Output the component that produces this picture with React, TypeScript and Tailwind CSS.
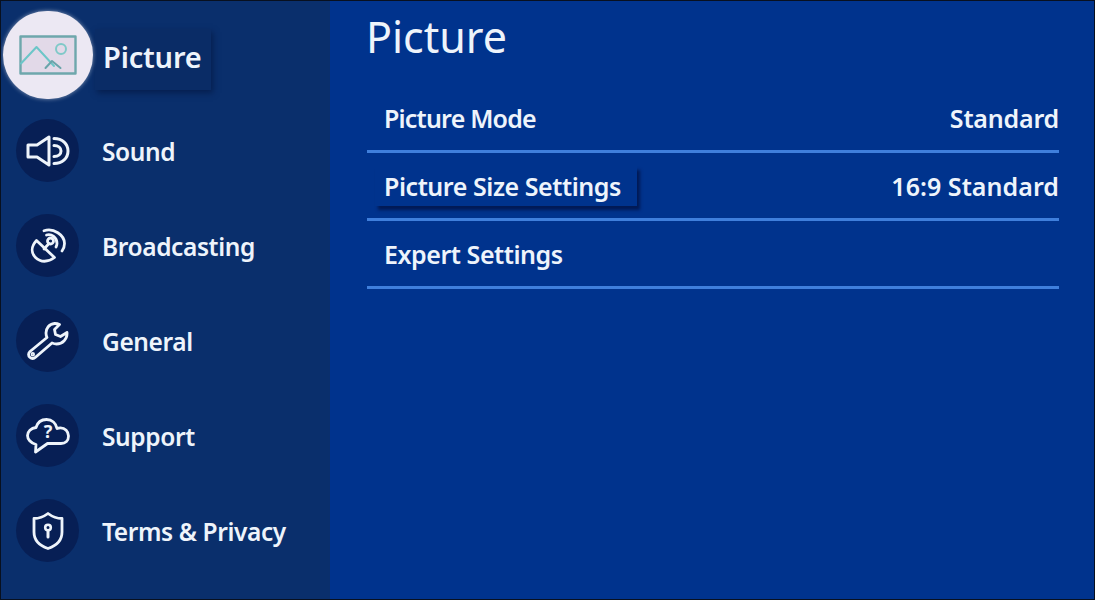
const ink = "#eef4fb";

function PictureIcon() {
  return (
    <svg width="58" height="40" viewBox="0 0 58 40" fill="none" strokeLinejoin="round" strokeLinecap="round">
      <rect x="1.5" y="1.5" width="55" height="37" fill="#e2d9e8" stroke="#6ea7ac" strokeWidth="2.4" />
      <circle cx="42" cy="14" r="5" stroke="#7fc9c8" strokeWidth="2" />
      <path d="M2 28.5 L17.5 12 L35 31" stroke="#6cc6c8" strokeWidth="2" />
      <path d="M26.5 33 L33 26 L41.5 33" stroke="#6aa4aa" strokeWidth="2" />
    </svg>
  );
}

function SoundIcon() {
  return (
    <svg width="44" height="32" viewBox="0 0 44 32" fill="none" stroke={ink} strokeWidth="3" strokeLinejoin="round" strokeLinecap="round">
      <path d="M2 10 H11 L23 2 V30 L11 22 H2 Z" />
      <path d="M28 3.5 C36.5 3.5 42 9 42 16 C42 23 36.5 28.5 28 28.5" />
      <path d="M28 10.5 C32.5 10.5 35 13 35 16 C35 19 32.5 21.5 28 21.5" />
    </svg>
  );
}

function DishIcon() {
  return (
    <svg width="38" height="36" viewBox="0 0 38 36" fill="none" stroke={ink} strokeWidth="2.8" strokeLinejoin="round" strokeLinecap="round">
      <path d="M7.5 12.5 C2 18.5 2 25 6.5 29.5 C11.5 34.5 19 34.5 25.5 29.5 Z" />
      <path d="M15 21 L20 15.5" />
      <circle cx="21.5" cy="13" r="3" />
      <path d="M17.5 7 C22.5 5.5 28 9.5 28 15.5 C28 17 27.5 18 27 19" />
      <path d="M15 2.8 C24.5 -0.5 35.5 7 35.5 15.5 C35.5 18.5 34.5 21 33 23" />
    </svg>
  );
}

function WrenchIcon() {
  return (
    <svg width="42" height="38" viewBox="0 0 42 38" fill="none" stroke={ink} strokeWidth="2.8" strokeLinejoin="round" strokeLinecap="round">
      <path d="M27.5 1.5 C22 2 19 6.5 19 11 C19 12.5 19.3 14 20 15.5 L3 29.5 C1 31.5 1.2 33.8 2.8 35.2 C4.4 36.6 6.8 36.8 8.8 35 L25 21 C26.5 21.6 28 22 29.5 22 C35.5 22 40.5 17 40 10.5 L33.5 14.5 L28.5 12.5 L27.5 7.5 L32.5 2.5 C31 1.8 29.5 1.4 27.5 1.5 Z" />
      <circle cx="5.8" cy="32.2" r="1.3" strokeWidth="1.8" />
    </svg>
  );
}

function CloudIcon() {
  return (
    <svg width="44" height="36" viewBox="0 0 44 36" fill="none" stroke={ink} strokeWidth="2.8" strokeLinejoin="round" strokeLinecap="round">
      <path d="M10 9.5 C11.5 4.5 15.5 1.5 20.5 1.5 C26 1.5 30 5 31 10.5 C31.8 10 33 9.8 34.5 9.8 C39 9.8 42.5 13.5 42.5 18 C42.5 22.5 39.5 25.5 35 25.5 H21.5 L9.5 34 L10 26.5 C4.5 25 1.5 21 1.5 17.5 C1.5 13.5 5 10 10 9.5 Z" />
      <text x="22" y="20" textAnchor="middle" fontSize="18" fontWeight="700" fill={ink} stroke="none" fontFamily="'Noto Sans', sans-serif">?</text>
    </svg>
  );
}

function ShieldIcon() {
  return (
    <svg width="32" height="38" viewBox="0 0 32 38" fill="none" stroke={ink} strokeWidth="2.8" strokeLinejoin="round" strokeLinecap="round">
      <path d="M2 6.5 C7 6.5 12 4.5 16 1.5 C20 4.5 25 6.5 30 6.5 V20 C30 28 25 33.5 16 36.5 C7 33.5 2 28 2 20 Z" />
      <circle cx="16" cy="15.5" r="2.8" strokeWidth="2.6" />
      <path d="M16 18.5 V25" strokeWidth="3" />
    </svg>
  );
}

const rows = [
  { label: "Sound", icon: <SoundIcon /> },
  { label: "Broadcasting", icon: <DishIcon /> },
  { label: "General", icon: <WrenchIcon /> },
  { label: "Support", icon: <CloudIcon /> },
  { label: "Terms & Privacy", icon: <ShieldIcon /> },
];

const rowCls =
  "flex h-[68px] items-center justify-between border-b-[3px] border-[#3f7fdc] pl-[17px] text-[25px] font-semibold leading-none";

export default function App() {
  return (
    <div className="w-[1095px] h-[600px] overflow-hidden bg-[#00338d] border border-[#08101f] flex font-['Noto_Sans',sans-serif] text-[#eef4fb]">
      <aside className="w-[329px] h-full shrink-0 bg-[#0a2f6c] pt-[7px]">
        <div className="relative h-[95px] flex items-center pl-[102px]">
          <div className="absolute left-[94px] top-[21px] w-[116px] h-[61px] bg-[#0a2c66] shadow-[2px_3px_6px_rgba(3,20,60,0.6)]" />
          <div className="absolute left-[2px] top-[3px] w-[90px] h-[88px] rounded-full bg-[#ece8f3] shadow-[0_0_4px_rgba(255,255,255,0.5)] flex items-center justify-center">
            <PictureIcon />
          </div>
          <span className="relative pt-[2px] text-[29px] font-semibold leading-none tracking-[-0.2px]">Picture</span>
        </div>
        {rows.map((r) => (
          <div key={r.label} className="h-[95px] flex items-center pl-[15px]">
            <div className="w-[63px] h-[63px] rounded-full bg-[#071f55] flex items-center justify-center shrink-0">
              {r.icon}
            </div>
            <span className="ml-[23px] pt-[4px] text-[24.5px] font-semibold leading-none tracking-[-0.4px] whitespace-nowrap">{r.label}</span>
          </div>
        ))}
      </aside>
      <main className="flex-1 pl-[37px] pr-[35px]">
        <h1 className="h-[84px] pt-[8px] -ml-[1px] text-[43px] font-normal leading-[56px]">Picture</h1>
        <div className={rowCls}>
          <span className="pt-[1px] tracking-[-0.8px]">Picture Mode</span>
          <span className="pt-[1px] tracking-[-0.2px]">Standard</span>
        </div>
        <div className={rowCls}>
          <span className="relative -ml-[9px] pl-[9px] pr-[16px] pt-[8px] pb-[7px] tracking-[-0.45px] shadow-[3px_4px_3px_#021a55]">Picture Size Settings</span>
          <span className="pt-[1px] tracking-[0.05px]">16:9 Standard</span>
        </div>
        <div className={rowCls}>
          <span className="pt-[1px] tracking-[-0.45px]">Expert Settings</span>
        </div>
      </main>
    </div>
  );
}
